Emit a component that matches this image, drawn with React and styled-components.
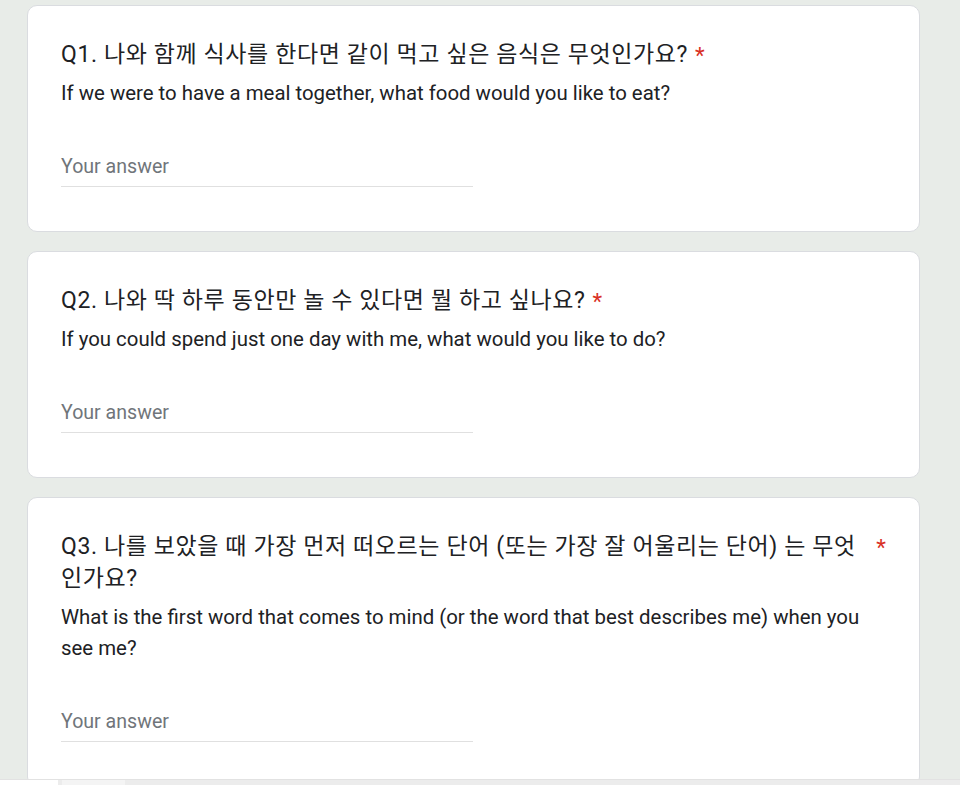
import React from "react";
import styled, { createGlobalStyle } from "styled-components";

const GlobalStyle = createGlobalStyle`
  html, body {
    margin: 0;
    padding: 0;
    background: #e8ece8;
    font-family: Roboto, "Noto Sans CJK KR", "Noto Sans", sans-serif;
    color: #202124;
  }
`;

const Page = styled.div`
  height: 785px;
  display: flex;
  flex-direction: column;
  overflow: hidden;
`;

const Scroller = styled.div`
  flex: 1;
  overflow: hidden;
  padding: 5px 0 0 27px;
`;

const List = styled.div`
  width: 893px;
  display: flex;
  flex-direction: column;
  gap: 19px;
`;

const Card = styled.div`
  box-sizing: border-box;
  background: #ffffff;
  border: 1px solid #dadce0;
  border-radius: 10px;
  padding: 33px 33px 44px;
`;

const TitleRow = styled.div`
  display: flex;
  align-items: flex-start;
`;

const Title = styled.div`
  flex: ${(p) => (p.$fill ? 1 : "0 1 auto")};
  font-size: 23px;
  line-height: 32px;
  font-weight: 400;
  letter-spacing: 0.6px;
  color: #202124;
`;

const Required = styled.span`
  flex: none;
  padding-left: 7px;
  font-size: 22.4px;
  line-height: 32px;
  color: #d93025;
`;

const Description = styled.div`
  margin-top: 7px;
  font-size: 20.4px;
  line-height: 31px;
  color: #202124;
`;

const AnswerField = styled.div`
  margin-top: 44px;
  width: 412px;
  padding-bottom: 5px;
  border-bottom: 1px solid #e0e0e0;
  font-size: 19.6px;
  line-height: 28px;
  color: #70757a;
`;

const Strip = styled.div`
  flex: none;
  height: 5px;
  display: flex;
  gap: 4px;
  background: #ececec;
  border-top: 1px solid #e2e2e2;
`;

const StripPart = styled.div`
  width: ${(p) => p.$w}px;
  flex: ${(p) => (p.$grow ? 1 : "none")};
  background: ${(p) => p.$bg};
`;

const questions = [
  {
    title: "Q1. 나와 함께 식사를 한다면 같이 먹고 싶은 음식은 무엇인가요?",
    desc: "If we were to have a meal together, what food would you like to eat?",
    fill: false,
  },
  {
    title: "Q2. 나와 딱 하루 동안만 놀 수 있다면 뭘 하고 싶나요?",
    desc: "If you could spend just one day with me, what would you like to do?",
    fill: false,
  },
  {
    title:
      "Q3. 나를 보았을 때 가장 먼저 떠오르는 단어 (또는 가장 잘 어울리는 단어) 는 무엇인가요?",
    desc: "What is the first word that comes to mind (or the word that best describes me) when you see me?",
    fill: true,
  },
];

export default function App() {
  return (
    <Page>
      <GlobalStyle />
      <Scroller>
        <List>
          {questions.map((q) => (
            <Card key={q.title}>
              <TitleRow>
                <Title $fill={q.fill}>{q.title}</Title>
                <Required>*</Required>
              </TitleRow>
              <Description>{q.desc}</Description>
              <AnswerField>Your answer</AnswerField>
            </Card>
          ))}
        </List>
      </Scroller>
      <Strip>
        <StripPart $w={58} $bg="#ffffff" />
        <StripPart $w={63} $bg="#f4f4f4" />
        <StripPart $grow $bg="#ececec" />
      </Strip>
    </Page>
  );
}
